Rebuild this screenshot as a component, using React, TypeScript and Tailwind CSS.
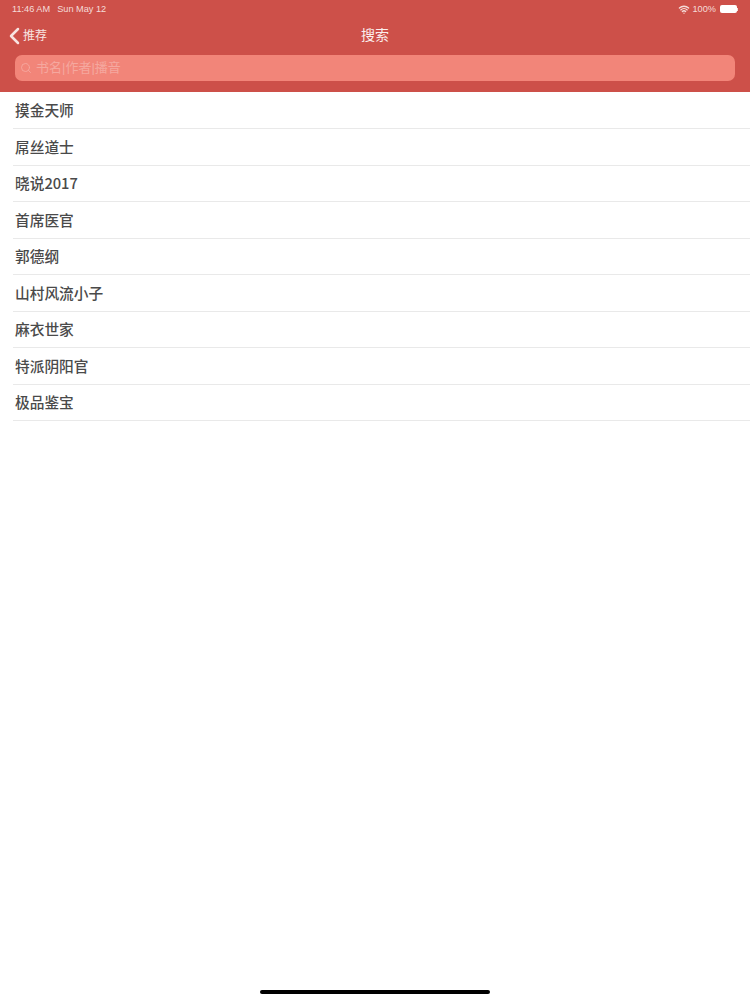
import { Search, Wifi } from 'lucide-react'

const results = ['摸金天师', '屌丝道士', '晓说2017', '首席医官', '郭德纲', '山村风流小子', '麻衣世家', '特派阴阳官', '极品鉴宝']

export default function App() {
  return (
    <div className="h-[1000px] w-[750px] flex flex-col bg-white overflow-hidden font-['Liberation_Sans','Noto_Sans_CJK_SC',sans-serif]">
      {/* Header */}
      <div className="h-[92px] bg-[#cd5049] flex flex-col shrink-0">
        {/* Status bar */}
        <div className="h-[17px] flex items-center justify-between pl-[12px] pr-[12px] pt-[2px] text-[9.2px] text-[#f5dcd9]">
          <div className="flex gap-[7px]">
            <span>11:46 AM</span>
            <span>Sun May 12</span>
          </div>
          <div className="flex items-center gap-[3px]">
            <Wifi className="h-[11px] w-[12px]" strokeWidth={3} />
            <span>100%</span>
            <div className="flex items-center ml-[1px]">
              <div className="h-[8px] w-[17px] rounded-[2px] bg-white"></div>
              <div className="h-[3px] w-[1px] bg-[#f5dcd9]"></div>
            </div>
          </div>
        </div>

        {/* Nav */}
        <div className="h-[38px] relative flex items-center justify-center -mt-[1px]">
          <div className="absolute left-[9px] top-[11px] flex items-center gap-[3px] text-[#f8e3e1]">
            <svg viewBox="0 0 11 18" className="h-[18px] w-[11px]" fill="none" stroke="currentColor" strokeWidth={2.5} strokeLinecap="round" strokeLinejoin="round">
              <path d="M9 2 L2 9 L9 16" />
            </svg>
            <span className="text-[12px]">推荐</span>
          </div>
          <span className="text-[14px] text-[#fbeeed]">搜索</span>
        </div>

        {/* Search */}
        <div className="px-[15px] mt-[1px]">
          <div className="h-[26px] rounded-[7px] bg-[#f28579] flex items-center pl-[5px] gap-[4px] text-[#f5a89f]">
            <Search className="h-[12px] w-[12px]" strokeWidth={1.8} />
            <span className="text-[13px]">书名|作者|播音</span>
          </div>
        </div>
      </div>

      {/* Results */}
      <div className="flex-1 flex flex-col pl-[13px] pt-[0.5px]">
        {results.map((name) => (
          <div key={name} className="h-[36.5px] flex items-center pl-[2px] border-b border-[#e9e9e9] text-[14.7px] font-medium text-[#4a4a4a] font-['Noto_Sans_CJK_SC',sans-serif]">
            {name}
          </div>
        ))}
      </div>

      {/* Home indicator */}
      <div className="h-[10px] shrink-0 flex justify-center">
        <div className="h-[4px] w-[230px] rounded-full bg-black"></div>
      </div>
    </div>
  )
}
